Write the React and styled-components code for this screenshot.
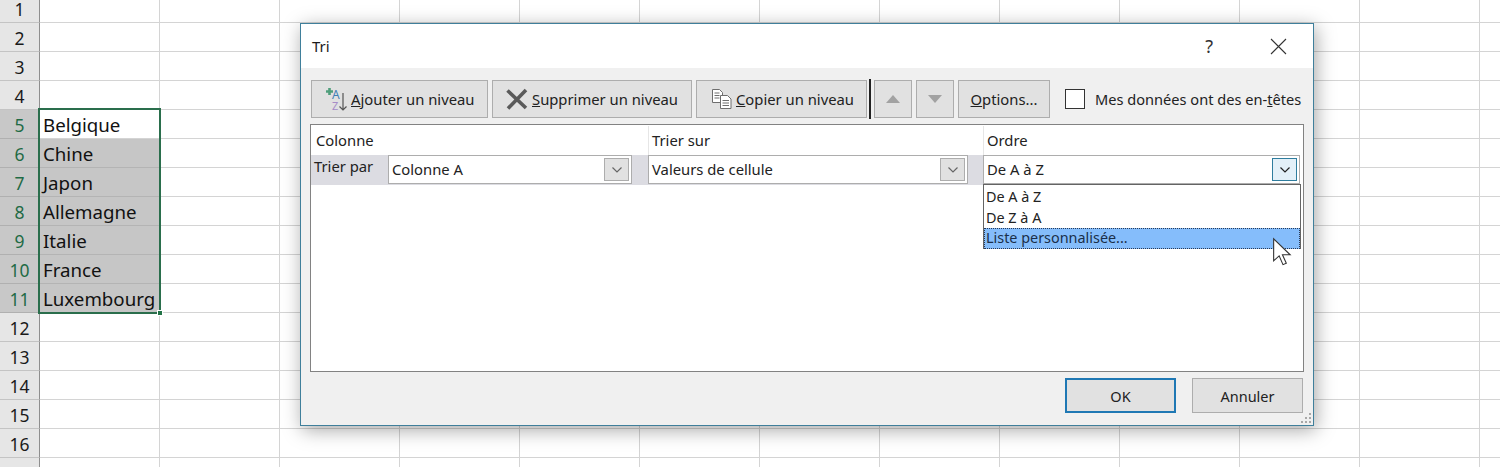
import React from 'react'
import styled, { createGlobalStyle } from 'styled-components'

const GlobalStyle = createGlobalStyle`
html, body {
  margin: 0;
  padding: 0;
  background: #fff;
  overflow: hidden;
}
`

const Page = styled.div`
  position: relative;
  width: 1500px;
  height: 467px;
  overflow: hidden;
  font-family: "Noto Sans", "Open Sans", sans-serif;
  color: #1c1c1c;
`

const Sheet = styled.div`
  display: grid;
  grid-template-columns: 40px repeat(13, 120px);
  grid-auto-rows: 29px;
  margin-top: -6px;
  width: 1600px;
`

const RowHead = styled.div`
  display: flex;
  align-items: center;
  justify-content: center;
  box-sizing: border-box;
  background: ${(p) => (p.$active ? '#c8c8c8' : '#e6e6e6')};
  color: ${(p) => (p.$active ? '#1f6b45' : '#1a1a1a')};
  border-right: 1px solid ${(p) => (p.$active ? '#1f6b45' : '#8f8f8f')};
  border-bottom: 1px solid ${(p) => (p.$active ? '#b0b0b0' : '#c4c4c4')};
  font-size: 17.5px;
  padding-top: 1px;
`

const Cell = styled.div`
  box-sizing: border-box;
  display: flex;
  align-items: center;
  padding-left: 3px;
  background: ${(p) => (p.$shaded ? '#c6c6c6' : '#fff')};
  border-right: 1px solid ${(p) => (p.$shaded ? '#b4b4b4' : '#d4d4d4')};
  border-bottom: 1px solid ${(p) => (p.$shaded ? '#b4b4b4' : '#d4d4d4')};
  font-size: 18.7px;
  color: #111;
  white-space: nowrap;
  overflow: hidden;
`

const Selection = styled.div`
  position: absolute;
  left: 38px;
  top: 108px;
  width: 123px;
  height: 206px;
  box-sizing: border-box;
  border: 2px solid #2a6e4c;
  pointer-events: none;
`

const Handle = styled.div`
  position: absolute;
  right: -4px;
  bottom: -4px;
  width: 4px;
  height: 4px;
  background: #217346;
  border: 1px solid #fff;
`

const Dialog = styled.div`
  position: absolute;
  left: 300px;
  top: 23px;
  width: 1014px;
  height: 403px;
  box-sizing: border-box;
  border: 1.5px solid #3f7f9b;
  background: #f0f0f0;
  box-shadow: 2px 4px 18px rgba(0, 0, 0, 0.35);
  display: flex;
  flex-direction: column;
`

const TitleBar = styled.div`
  height: 44px;
  flex: none;
  background: #fff;
  display: flex;
  align-items: center;
  padding: 0 26px 0 11px;
  font-size: 15px;
`

const Title = styled.div`
  flex: 1;
`

const Help = styled.div`
  font-size: 18px;
  color: #333;
  margin-right: 57px;
`

const Body = styled.div`
  flex: 1;
  display: flex;
  flex-direction: column;
  padding: 12px 9px 0 9px;
  position: relative;
`

const Toolbar = styled.div`
  display: flex;
  align-items: center;
  height: 38px;
  padding-left: 1px;
`

const ToolButton = styled.div`
  box-sizing: border-box;
  width: ${(p) => p.$w}px;
  height: 38px;
  flex: none;
  display: flex;
  align-items: center;
  justify-content: ${(p) => (p.$center ? 'center' : 'flex-start')};
  padding-left: ${(p) => (p.$center ? 0 : p.$pad)}px;
  gap: 3px;
  margin-right: 4px;
  background: #e1e1e1;
  border: 1px solid #adadad;
  font-size: 14.8px;
  color: #222;
  white-space: nowrap;
`

const ToolSeparator = styled.div`
  width: 2px;
  height: 40px;
  flex: none;
  background: #222;
  margin: 0 3px 0 -2px;
`

const HeadersCheck = styled.div`
  display: flex;
  align-items: center;
  margin-left: 11px;
  font-size: 14.6px;
  color: #222;
  white-space: nowrap;
`

const CheckBox = styled.div`
  width: 18px;
  height: 18px;
  border: 1px solid #333;
  background: #fff;
  margin-right: 10px;
`

const Table = styled.div`
  position: relative;
  box-sizing: border-box;
  margin-top: 6px;
  height: 248px;
  border: 1px solid #828282;
  background: #fff;
  font-size: 14.8px;
  color: #222;
`

const TableHead = styled.div`
  display: grid;
  grid-template-columns: 337px 335px 1fr;
  height: 30px;
`

const HeadCell = styled.div`
  display: flex;
  align-items: center;
  padding-left: ${(p) => (p.$first ? 5 : 3)}px;
  height: 29px;
  margin-top: 1px;
  padding-bottom: 2px;
  box-sizing: border-box;
  border-left: ${(p) => (p.$first ? 'none' : '1px solid #e6e6e6')};
`

const LevelRow = styled.div`
  display: grid;
  grid-template-columns: 337px 335px 1fr;
  height: 30px;
`

const LevelCell = styled.div`
  display: flex;
  align-items: flex-start;
  background: ${(p) => (p.$plain ? '#fff' : '#dcdce2')};
  padding-right: ${(p) => p.$right || 0}px;
`

const LevelLabel = styled.div`
  width: 74px;
  padding-left: 3px;
  flex: none;
  line-height: 22px;
`

const Combo = styled.div`
  flex: 1;
  box-sizing: border-box;
  height: 29px;
  display: flex;
  align-items: center;
  justify-content: space-between;
  background: #fff;
  border: 1px solid #adadad;
  padding: 0 2px 0 3px;
`

const ComboText = styled.span`
  margin-top: -2px;
`

const ComboButton = styled.div`
  width: 25px;
  height: 23px;
  box-sizing: border-box;
  display: flex;
  align-items: center;
  justify-content: center;
  background: ${(p) => (p.$open ? '#e3f0f8' : '#e1e1e1')};
  border: 1px solid ${(p) => (p.$open ? '#2f7d9e' : '#adadad')};
  color: ${(p) => (p.$open ? '#222' : '#666')};
`

const DropList = styled.div`
  position: absolute;
  left: 672px;
  top: 59px;
  width: 318px;
  box-sizing: border-box;
  height: 65px;
  border: 1px solid #646464;
  background: #fff;
  padding-top: 1px;
  font-size: 14.4px;
`

const DropItem = styled.div`
  height: 21px;
  line-height: ${(p) => (p.$selected ? 20 : 21)}px;
  padding-left: 2px;
  color: ${(p) => (p.$selected ? '#1a2f4a' : '#222')};
  background: ${(p) => (p.$selected ? '#85bdfb' : 'transparent')};
  outline: ${(p) => (p.$selected ? '1px dotted #2a3a55' : 'none')};
  outline-offset: -1px;
`

const CursorWrap = styled.svg`
  position: absolute;
  left: 1272px;
  top: 237px;
`

const Footer = styled.div`
  display: flex;
  justify-content: flex-end;
  gap: 16px;
  margin-top: 6px;
  padding-right: 1px;
`

const FooterButton = styled.div`
  box-sizing: border-box;
  width: 111px;
  height: 35px;
  display: flex;
  align-items: center;
  justify-content: center;
  background: #e1e1e1;
  border: ${(p) => (p.$primary ? '2px solid #1f78b4' : '1px solid #adadad')};
  font-size: 14.5px;
  color: #222;
`

const Grip = styled.svg`
  position: absolute;
  right: 1px;
  bottom: 1px;
`

const IconSvg = styled.svg`
  overflow: visible;
  flex: none;
`

function SortIcon() {
  return (
    <IconSvg width="26" height="26" viewBox="0 0 26 26">
      <path d="M4 5.5h7M7.5 2v7" stroke="#4f9e7b" strokeWidth="2.6" />
      <text x="10" y="12.5" fontSize="12" fontFamily="Noto Sans" fill="#3f7fb5">A</text>
      <text x="10" y="23.5" fontSize="11" fontFamily="Noto Sans" fill="#a68cc8">Z</text>
      <path d="M21 7v17M17.5 20.5L21 24l3.5-3.5" stroke="#555" strokeWidth="1.2" fill="none" />
    </IconSvg>
  )
}

function DeleteIcon() {
  return (
    <IconSvg width="24" height="22" viewBox="0 0 24 22">
      <path d="M2.5 2.5L21 20M21 2L3 20.5" stroke="#5a5a5a" strokeWidth="3.6" fill="none" />
    </IconSvg>
  )
}

function CopyIcon() {
  return (
    <IconSvg width="22" height="22" viewBox="0 0 22 22" fill="#fff" stroke="#6e6e6e" strokeWidth="1">
      <path d="M1.5 1.5h7l3 3v10h-10z" />
      <path d="M3.5 5h5M3.5 7.5h5M3.5 10h5" fill="none" />
      <path d="M9.5 7.5h7l3.5 3.5v9.5h-10.5z" />
      <path d="M11.5 12.5h6.5M11.5 15h6.5M11.5 17.5h6.5" fill="none" />
    </IconSvg>
  )
}

function Triangle({ up }) {
  return (
    <svg width="16" height="10" viewBox="0 0 16 10">
      <path d={up ? 'M8 1L15 9H1z' : 'M1 1h14L8 9z'} fill="#a2a2a2" />
    </svg>
  )
}

function Chevron() {
  return (
    <svg width="12" height="8" viewBox="0 0 12 8">
      <path d="M1.5 1.5L6 6l4.5-4.5" stroke="currentColor" strokeWidth="1.2" fill="none" />
    </svg>
  )
}

const rows = [
  null, null, null, null,
  'Belgique', 'Chine', 'Japon', 'Allemagne', 'Italie', 'France', 'Luxembourg',
  null, null, null, null, null, null,
]

export default function App() {
  return (
    <Page>
      <GlobalStyle />
      <Sheet>
        {rows.map((name, i) => (
          <React.Fragment key={i}>
            <RowHead $active={i >= 4 && i <= 10}>{i + 1}</RowHead>
            <Cell $shaded={i >= 5 && i <= 10}>{name}</Cell>
            {Array.from({ length: 12 }).map((_, c) => (
              <Cell key={c} />
            ))}
          </React.Fragment>
        ))}
      </Sheet>
      <Selection>
        <Handle />
      </Selection>

      <Dialog>
        <TitleBar>
          <Title>Tri</Title>
          <Help>?</Help>
          <svg width="17" height="17" viewBox="0 0 17 17">
            <path d="M1 1l15 15M16 1L1 16" stroke="#333" strokeWidth="1.1" fill="none" />
          </svg>
        </TitleBar>
        <Body>
          <Toolbar>
            <ToolButton $w={177} $pad={10}>
              <SortIcon />
              <span><u>A</u>jouter un niveau</span>
            </ToolButton>
            <ToolButton $w={200} $pad={12}>
              <DeleteIcon />
              <span><u>S</u>upprimer un niveau</span>
            </ToolButton>
            <ToolButton $w={171} $pad={14}>
              <CopyIcon />
              <span><u>C</u>opier un niveau</span>
            </ToolButton>
            <ToolSeparator />
            <ToolButton $w={38} $center><Triangle up /></ToolButton>
            <ToolButton $w={38} $center><Triangle /></ToolButton>
            <ToolButton $w={92} $center><span><u>O</u>ptions...</span></ToolButton>
            <HeadersCheck>
              <CheckBox />
              <span>Mes données ont des en-<u>t</u>êtes</span>
            </HeadersCheck>
          </Toolbar>

          <Table>
            <TableHead>
              <HeadCell $first>Colonne</HeadCell>
              <HeadCell>Trier sur</HeadCell>
              <HeadCell>Ordre</HeadCell>
            </TableHead>
            <LevelRow>
              <LevelCell $right={16}>
                <LevelLabel>Trier par</LevelLabel>
                <Combo>
                  <ComboText>Colonne A</ComboText>
                  <ComboButton><Chevron /></ComboButton>
                </Combo>
              </LevelCell>
              <LevelCell $right={15}>
                <Combo>
                  <ComboText>Valeurs de cellule</ComboText>
                  <ComboButton><Chevron /></ComboButton>
                </Combo>
              </LevelCell>
              <LevelCell $plain $right={3}>
                <Combo>
                  <ComboText>De A à Z</ComboText>
                  <ComboButton $open><Chevron /></ComboButton>
                </Combo>
              </LevelCell>
            </LevelRow>
            <DropList>
              <DropItem>De A à Z</DropItem>
              <DropItem>De Z à A</DropItem>
              <DropItem $selected>Liste personnalisée...</DropItem>
            </DropList>
          </Table>

          <Footer>
            <FooterButton $primary>OK</FooterButton>
            <FooterButton>Annuler</FooterButton>
          </Footer>
          <Grip width="12" height="12" viewBox="0 0 12 12" fill="#a8a8a8">
            <path d="M9 1h2v2H9zM5 5h2v2H5zM9 5h2v2H9zM1 9h2v2H1zM5 9h2v2H5zM9 9h2v2H9z" />
          </Grip>
        </Body>
      </Dialog>

      <CursorWrap width="22" height="30" viewBox="0 0 20 27">
        <path d="M1.5 1.5v20l5-4.5 3.5 8 3-1.3-3.5-7.7h7z" fill="#fff" stroke="#333" strokeWidth="1" />
      </CursorWrap>
    </Page>
  )
}
